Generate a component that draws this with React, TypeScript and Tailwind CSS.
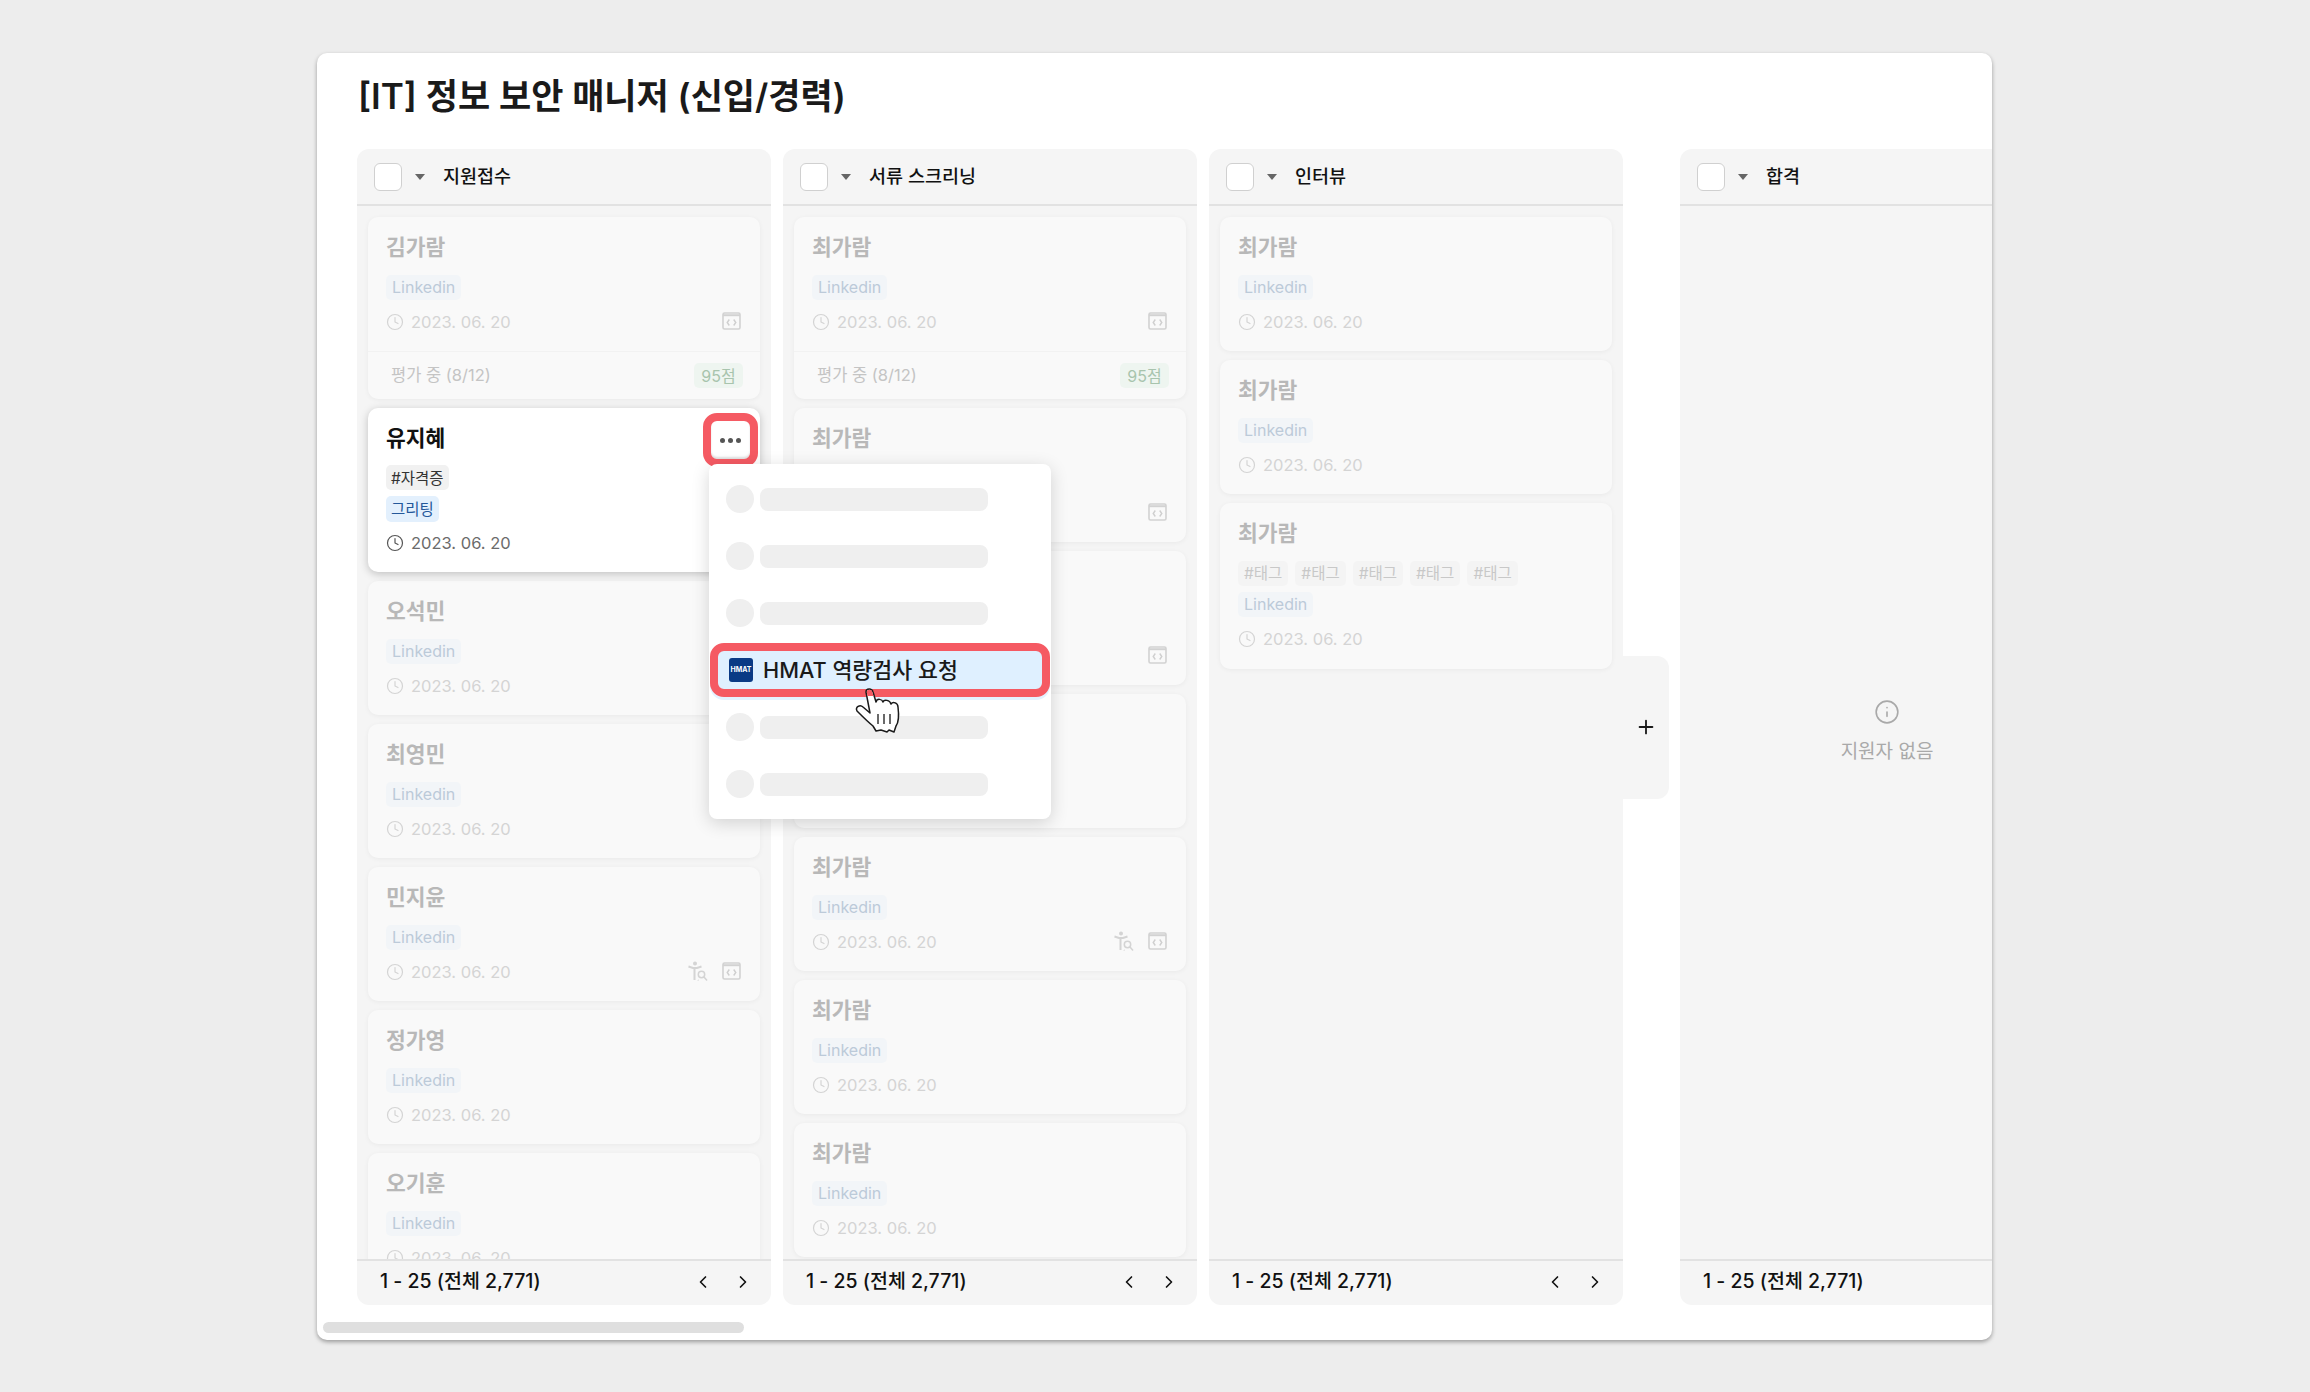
import React from "react";
import { ChevronLeft, ChevronRight, Clock4, Info, Plus } from "lucide-react";

type Applicant = {
  name: string;
  tags?: string[];
  footer?: boolean;
  assess?: boolean;
  code?: boolean;
};

const firstColumn: Applicant[] = [
  { name: "김가람", code: true, footer: true },
  { name: "유지혜" },
  { name: "오석민", code: false },
  { name: "최영민" },
  { name: "민지윤", assess: true, code: true },
  { name: "정가영" },
  { name: "오기훈" },
];

const secondColumn: Applicant[] = [
  { name: "최가람", code: true, footer: true },
  { name: "최가람", code: true },
  { name: "최가람", code: true },
  { name: "최가람" },
  { name: "최가람", assess: true, code: true },
  { name: "최가람" },
  { name: "최가람" },
];

const thirdColumn: Applicant[] = [
  { name: "최가람" },
  { name: "최가람" },
  { name: "최가람", tags: ["#태그", "#태그", "#태그", "#태그", "#태그"] },
];

function CodeIcon() {
  return (
    <svg className="-mt-[2px]" width="19" height="18" viewBox="0 0 19 18" fill="none">
      <rect x="1" y="1" width="17" height="16" rx="1.500" stroke="#d2d2d2" strokeWidth="1.600" />
      <path d="M1 3.200h17" stroke="#d2d2d2" strokeWidth="2" />
      <path d="M7.300 7.500 5.200 10.500l2.100 3M11.700 7.500l2.100 3-2.100 3" stroke="#cfcfcf" strokeWidth="1.400" />
    </svg>
  );
}

function AssessIcon() {
  return (
    <svg className="-mt-[2px]" width="21" height="21" viewBox="0 0 21 21" fill="none">
      <circle cx="7" cy="2.500" r="2" fill="#d4d4d4" />
      <path d="M0.500 5.500 5 7h4l4.500-1.500M6.500 7v12" stroke="#d4d4d4" strokeWidth="2" />
      <circle cx="13.500" cy="13.500" r="3.200" stroke="#d4d4d4" strokeWidth="1.500" />
      <path d="m16 16 3 3.500M10 19l.5.500" stroke="#d4d4d4" strokeWidth="1.500" />
    </svg>
  );
}

function DateRow({ muted, assess, code }: { muted: boolean; assess?: boolean; code?: boolean }) {
  return (
    <div className="flex h-6 items-center justify-between pr-[1px]">
      <div className={`flex items-center gap-[7px] text-[16.500px] ${muted ? "text-[#d4d4d4]" : "text-[#6b6b6b]"}`}>
        <Clock4 size={18} strokeWidth={1.6} className={muted ? "text-[#d4d4d4]" : "text-[#555555]"} />
        <span>2023. 06. 20</span>
      </div>
      <div className="flex items-center gap-[13px]">
        {assess && <AssessIcon />}
        {code && <CodeIcon />}
      </div>
    </div>
  );
}

function LinkedinTag() {
  return (
    <span className="flex h-[25px] items-center rounded-[5px] bg-[#f2f5f8] px-[6px] pb-[1px] text-[16px] text-[#bccad9]">
      Linkedin
    </span>
  );
}

function FadedCard({ applicant }: { applicant: Applicant }) {
  return (
    <div className="shrink-0 rounded-[10px] bg-[#f9f9f9] shadow-[0_1px_5px_rgba(0,0,0,0.05)]">
      <div className={`px-[18px] pt-[16px] ${applicant.tags ? "pb-[18px]" : "pb-[17px]"}`}>
        <p className="h-7 text-[21.500px] font-semibold leading-7 text-[#b8b8b8]">{applicant.name}</p>
        <div className="mb-[10px] mt-[14px] flex flex-col items-start gap-[6px]">
          {applicant.tags && (
            <div className="flex gap-[7px]">
              {applicant.tags.map((tag, index) => (
                <span
                  key={index}
                  className="flex h-[25px] items-center rounded-[5px] bg-[#f4f4f4] px-[6px] text-[15.500px] text-[#c8c8c8]"
                >
                  {tag}
                </span>
              ))}
            </div>
          )}
          <LinkedinTag />
        </div>
        <DateRow muted assess={applicant.assess} code={applicant.code} />
      </div>
      {applicant.footer && (
        <div className="flex h-[48px] items-center justify-between border-t border-[#f2f2f2] pl-[23px] pr-[17px]">
          <span className="text-[16.500px] text-[#c4c4c4]">평가 중 (8/12)</span>
          <span className="flex h-[25px] w-[49px] items-center justify-center rounded-[5px] bg-[#eef5f0] text-[16px] text-[#a8c4ad]">
            95점
          </span>
        </div>
      )}
    </div>
  );
}

function ActiveCard() {
  return (
    <div className="relative shrink-0 rounded-[10px] bg-white px-[18px] pb-[17px] pt-[16px] shadow-[0_2px_9px_rgba(0,0,0,0.22)]">
      <p className="h-7 text-[21.500px] font-semibold leading-7 text-[#111111]">유지혜</p>
      <div className="mb-[9px] mt-[13px] flex flex-col items-start gap-[6px]">
        <span className="flex h-[25px] items-center rounded-[5px] bg-[#f1f1f1] px-[5px] pt-[2px] text-[15.500px] text-[#333333]">
          #자격증
        </span>
        <span className="flex h-[26px] items-center rounded-[5px] bg-[#e3f0fd] px-[5px] pt-[1px] text-[15.500px] text-[#24589a]">
          그리팅
        </span>
      </div>
      <DateRow muted={false} />
      <div className="absolute right-[2px] top-[5px] flex h-[54px] w-[55px] items-center justify-center rounded-[14px] border-8 border-[#f55a63] bg-white shadow-[inset_0_-2px_2px_rgba(0,0,0,0.12)]">
        <div className="flex gap-[3px]">
          <span className="h-[5px] w-[5px] rounded-full bg-[#555555]" />
          <span className="h-[5px] w-[5px] rounded-full bg-[#555555]" />
          <span className="h-[5px] w-[5px] rounded-full bg-[#555555]" />
        </div>
      </div>
    </div>
  );
}

function ColumnShell({ title, children }: { title: string; children: React.ReactNode }) {
  return (
    <div className="flex h-[1156px] w-[414px] shrink-0 flex-col rounded-xl bg-[#f5f5f5]">
      <div className="flex h-[57px] shrink-0 items-center border-b-2 border-[#e2e2e2] pl-[17px]">
        <span className="h-7 w-7 rounded-[6px] border border-[#d0d0d0] bg-white" />
        <span className="ml-[13px] h-0 w-0 border-x-[5px] border-t-[6px] border-x-transparent border-t-[#666666]" />
        <span className="ml-[18px] text-[18.500px] font-medium text-[#111111]">{title}</span>
      </div>
      <div className="min-h-0 flex-1 overflow-hidden">{children}</div>
      <div className="flex h-[46px] shrink-0 items-center justify-between border-t-2 border-[#e2e2e2] pb-[2px] pl-[23px] pr-[18px] text-[#111111]">
        <span className="text-[19.500px] font-medium">1 - 25 (전체 2,771)</span>
        <div className="flex gap-[20px]">
          <ChevronLeft size={20} strokeWidth={2} />
          <ChevronRight size={20} strokeWidth={2} />
        </div>
      </div>
    </div>
  );
}

function SkeletonRow() {
  return (
    <div className="flex h-[57px] items-center pl-[17px]">
      <span className="h-[28px] w-[28px] rounded-full bg-[#efefef]" />
      <span className="ml-[6px] h-[23px] w-[228px] rounded-[8px] bg-[#efefef]" />
    </div>
  );
}

function ActionMenu() {
  return (
    <div className="absolute left-[392px] top-[411px] flex h-[355px] w-[342px] flex-col justify-center rounded-[8px] bg-white shadow-[0_4px_18px_rgba(0,0,0,0.16)]">
      <SkeletonRow />
      <SkeletonRow />
      <SkeletonRow />
      <div className="flex h-[57px] items-center px-[1px]">
        <div className="flex h-[54px] w-full items-center rounded-[14px] border-8 border-[#f55a63] bg-[#dff0ff] pl-[11px] shadow-[0_3px_0_#e4f2ff]">
          <span className="flex h-6 w-6 items-center justify-center rounded-[3px] bg-[#0a3a85] text-[7px] font-bold text-white">
            HMAT
          </span>
          <span className="ml-[10px] pt-[1px] text-[21.700px] font-medium text-[#1a1a1a]">HMAT 역량검사 요청</span>
        </div>
      </div>
      <SkeletonRow />
      <SkeletonRow />
    </div>
  );
}

function HandCursor() {
  return (
    <svg className="absolute left-[528px] top-[627px]" width="70" height="60" viewBox="0 0 70 60" fill="none">
      <path
        d="M21 12C21 8 27 8 28 12L31 22C32 18 37 19 38 22C39 19 45 20 46 24C48 21 53 23 53 27C54 35 54 42 51 46L49 52L44 50L42 52L36 50L31 51L28 46C23 42 17 36 12 31C10 27 15 24 18 27L25 33Z"
        fill="white"
        stroke="#1a1a1a"
        strokeWidth="1.500"
        strokeLinejoin="round"
      />
      <path d="M21.800 12C21.800 9 27 9 27.300 12L28.500 16H22.500Z" fill="#f55a63" />
      <path d="M33 34V44M39 34V44M45 34V44" stroke="#1a1a1a" strokeWidth="1.300" />
    </svg>
  );
}

export default function App() {
  return (
    <div className="h-[1392px] w-[2310px] overflow-hidden bg-[#ededed] pl-[317px] pt-[53px] [font-family:'Inter','Noto_Sans_CJK_KR',sans-serif]">
      <div className="relative h-[1287px] w-[1675px] overflow-hidden rounded-[10px] bg-white shadow-[0_2px_4px_rgba(0,0,0,0.35)]">
        <h1 className="h-[96px] pl-[41px] pt-[23px] text-[35px] font-semibold leading-10 text-[#1a1a1a]">
          [IT] 정보 보안 매니저 (신입/경력)
        </h1>
        <div className="flex gap-3 pl-[40px]">
          <ColumnShell title="지원접수">
            <div className="flex flex-col gap-[9px] px-[11px] pt-[11px]">
              {firstColumn.map((applicant, index) =>
                applicant.name === "유지혜" ? (
                  <ActiveCard key={index} />
                ) : (
                  <FadedCard key={index} applicant={applicant} />
                ),
              )}
            </div>
          </ColumnShell>
          <ColumnShell title="서류 스크리닝">
            <div className="flex flex-col gap-[9px] px-[11px] pt-[11px]">
              {secondColumn.map((applicant, index) => (
                <FadedCard key={index} applicant={applicant} />
              ))}
            </div>
          </ColumnShell>
          <div className="flex shrink-0 items-center">
            <ColumnShell title="인터뷰">
              <div className="flex flex-col gap-[9px] px-[11px] pt-[11px]">
                {thirdColumn.map((applicant, index) => (
                  <FadedCard key={index} applicant={applicant} />
                ))}
              </div>
            </ColumnShell>
            <div className="-mr-[1px] flex h-[143px] w-[46px] items-center justify-center rounded-r-[12px] bg-[#f5f5f5] text-[#1a1a1a]">
              <Plus size={22} strokeWidth={2} />
            </div>
          </div>
          <ColumnShell title="합격">
            <div className="flex h-full flex-col items-center justify-center gap-[13px] text-[#a9a9a9]">
              <Info size={26} strokeWidth={1.5} />
              <span className="text-[19px]">지원자 없음</span>
            </div>
          </ColumnShell>
        </div>
        <div className="ml-[6px] mt-[17px] h-[11px] w-[421px] rounded-full bg-[#dfdfdf]" />
        <ActionMenu />
        <HandCursor />
      </div>
    </div>
  );
}
